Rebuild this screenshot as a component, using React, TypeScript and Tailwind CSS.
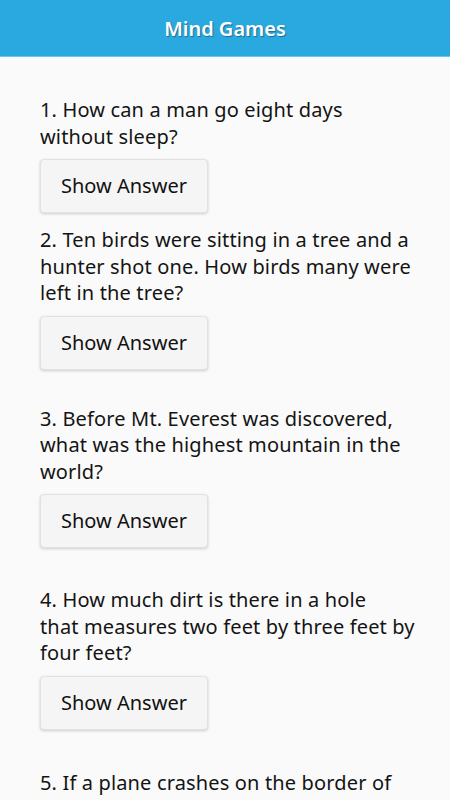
const questions = [
  { lines: ["1. How can a man go eight days", "without sleep?"], gap: "" },
  {
    lines: ["2. Ten birds were sitting in a tree and a", "hunter shot one. How birds many were", "left in the tree?"],
    gap: "mt-[14px]",
  },
  {
    lines: ["3. Before Mt. Everest was discovered,", "what was the highest mountain in the", "world?"],
    gap: "mt-[36px]",
  },
  {
    lines: ["4. How much dirt is there in a hole", "that measures two feet by three feet by", "four feet?"],
    gap: "mt-[39px]",
  },
  {
    lines: ["5. If a plane crashes on the border of", "The United States and Mexico, where", "do they bury the survivors?"],
    gap: "mt-[40px]",
  },
];

function ShowAnswerButton() {
  return (
    <button className="mt-[9px] flex h-[54px] w-[168px] items-center justify-center rounded-[4px] border border-[#e2e2e2] bg-[#f5f5f5] text-[20px] text-[#111] shadow-[0_1px_3px_rgba(0,0,0,0.18)]">
      Show Answer
    </button>
  );
}

export default function App() {
  return (
    <div className="h-[800px] w-[450px] overflow-hidden bg-[#fafafa] font-['Noto_Sans','Open_Sans',sans-serif]">
      <header className="flex h-[56px] items-center justify-center bg-[#29a9e0] pt-[2px] shadow-[0_1px_0_#6cc4ea]">
        <h1 className="text-[20px] font-semibold text-white [text-shadow:1px_1px_1px_rgba(0,0,0,0.35)]">
          Mind Games
        </h1>
      </header>

      <main className="px-[40px] pt-[41px]">
        {questions.map((q, i) => (
          <section key={i} className={q.gap}>
            <p className="whitespace-nowrap text-[20px] leading-[26.5px] tracking-[0.15px] text-[#141414]">
              {q.lines.map((line, j) => (
                <span key={j} className="block">
                  {line}
                </span>
              ))}
            </p>
            {i < questions.length - 1 && <ShowAnswerButton />}
          </section>
        ))}
      </main>
    </div>
  );
}
